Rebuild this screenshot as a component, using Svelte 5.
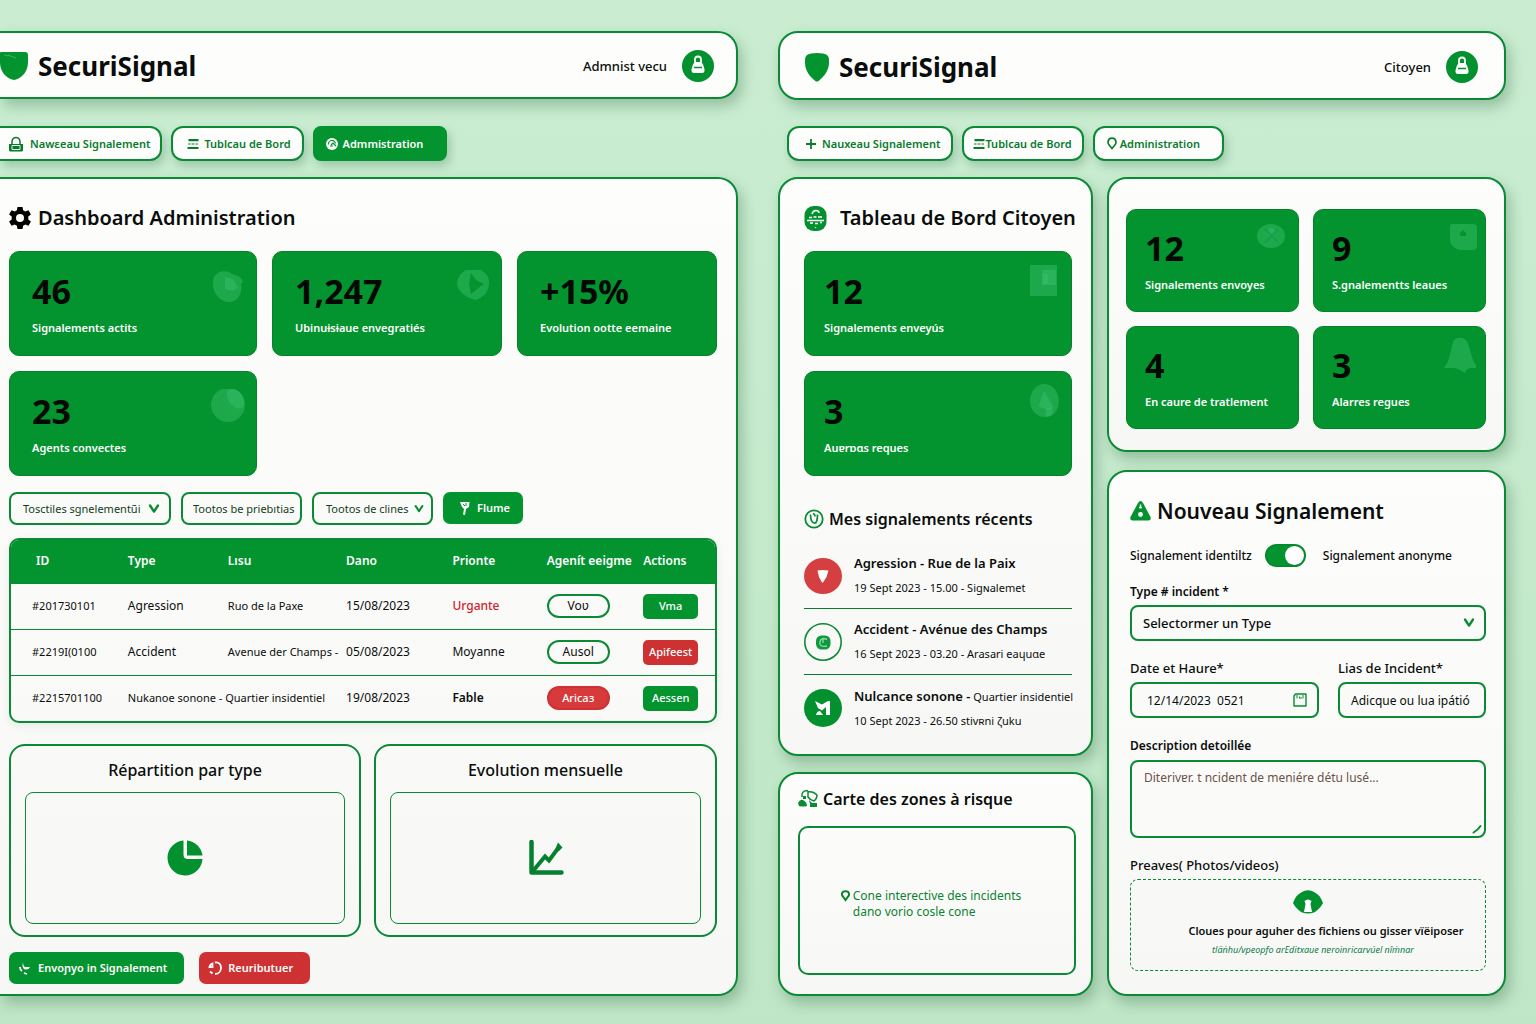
<script>
  const adminStats = [
    { value: '46', label: 'Signalements actits', art: 'blob' },
    { value: '1,247', label: 'Ubinuɨsɨaue envegratiés', art: 'play' },
    { value: '+15%', label: 'Evolution ootte eemaine', art: '' },
    { value: '23', label: 'Agents convectes', art: 'globe' }
  ];
  const citizenStats = [
    { value: '12', label: 'Signalements enveyús', art: 'square' },
    { value: '3', label: 'Auɐrɒɑs reques', art: 'drop' }
  ];
  const summaryStats = [
    { value: '12', label: 'Signalements envoyes', art: 'person' },
    { value: '9', label: 'S.gnalementts leaues', art: 'tile' },
    { value: '4', label: 'En caure de tratlement', art: '' },
    { value: '3', label: 'Alarres regues', art: 'bell' }
  ];
  const rows = [
    { id: '#201730101', type: 'Agression', place: 'Ruo de la Paxe', date: '15/08/2023', prio: 'Urgante', level: 'urgent', agent: 'Voʋ', agentKind: 'line', action: 'Vma', actionKind: 'go' },
    { id: '#2219I(0100', type: 'Accident', place: 'Avenue der Champs -', date: '05/08/2023', prio: 'Moyanne', level: 'medium', agent: 'Ausol', agentKind: 'line', action: 'Apifeest', actionKind: 'stop' },
    { id: '#2215701100', type: 'Nukanoe sonone - Quartier insidentiel', place: '', date: '19/08/2023', prio: 'Fable', level: 'low', agent: 'Aricaɜ', agentKind: 'full', action: 'Aessen', actionKind: 'go' }
  ];
  const recent = [
    { kind: 'alert', strong: 'Agression - Rue de la Paix', rest: '', meta: '19 Sept 2023 - 15.00 - Sigɴalemet' },
    { kind: 'ring', strong: 'Accident - Avénue des Champs', rest: '', meta: '16 Sept 2023 - 03.20 - Arasari eaɥuɑe' },
    { kind: 'noise', strong: 'Nulcance sonone -', rest: 'Quartier insidentiel', meta: '10 Sept 2023 - 26.50 stivʀni ζuku' }
  ];
  let anonymous = $state(true);
</script>

{#snippet chevron()}
  <svg class="chevron" viewBox="0 0 12 12" width="12" height="12" aria-hidden="true"><path d="M2 2.5 6 8.6 10 2.5" fill="none" stroke="currentColor" stroke-width="2.4" stroke-linecap="round" stroke-linejoin="round" /></svg>
{/snippet}

{#snippet bars()}
  <svg viewBox="0 0 12 12" width="12" height="12" aria-hidden="true"><path d="M1.500 2.200h10M.5 10h11" stroke="currentColor" stroke-width="2.200" /><path d="M1 6h2.500M4.500 6h3M8.500 6h2.500" stroke="currentColor" stroke-width="1.200" /></svg>
{/snippet}

{#snippet avatar()}
  <svg viewBox="0 0 32 32" width="32" height="32" aria-hidden="true">
    <circle cx="16" cy="16" r="16" fill="#03912f" />
    <path d="M13 12.500V9.500a3 3 0 0 1 6 0v3" fill="none" stroke="#fff" stroke-width="1.800" />
    <path d="M12.500 12h7q2.500 3 3 7.500.3 3.500-2.500 3.500h-8q-2.800 0-2.500-3.500.5-4.500 3-7.500z" fill="#fff" />
    <path d="M12 17.500h8" stroke="#03912f" stroke-width="1.500" />
  </svg>
{/snippet}

{#snippet art(name)}
  <svg class="art" viewBox="0 0 36 36" width="36" height="36" aria-hidden="true">
    {#if name === 'blob'}
      <path d="M5 8C9 1 19 1 23 5q8 1 11 8l-2 2c2 10-4 19-13 18C9 32 1 20 5 8z" /><path d="M16 8l8 2 5 9-6 3-7-2z" />
    {:else if name === 'play'}
      <path fill-rule="evenodd" d="M12 1h15q8 5 8 12c0 10-5 15-13 18C12 29 3 22 3 14q1-9 9-13zM17 4l-2 11 2 10 10-8 3-2-8-4z" />
    {:else if name === 'globe'}
      <circle cx="19" cy="16" r="17" /><path d="M18 2c8-5 18 2 17 13q-2 6-8 4-10-5-9-17z" /><path d="M0 14q-1 3 1 5" />
    {:else if name === 'square'}
      <path d="M6 2h27v31H6z" /><path d="M18 7h14v15H18z" /><path d="M19 11h5v10h-5z" />
    {:else if name === 'drop'}
      <path d="M20 1c19 0 20 33 1 33-8 0-15-6-15-16S13 1 20 1z" /><path d="M20 8l9 15q-3 6-10 2-5-1-4-3z" /><path d="M22 26l7-2-1 8-6 2z" />
    {:else if name === 'person'}
      <ellipse cx="15" cy="16" rx="14" ry="12" /><circle cx="15" cy="12" r="4" /><path d="M9 9l13 13M22 9L9 23" stroke="#16a04c" stroke-width="2" />
    {:else if name === 'tile'}
      <path fill-rule="evenodd" d="M8 4h22q4 0 4 3v19q0 4-4 4H17Q7 28 7 19V6zM20 10l-3 3v3h6v-3z" />
    {:else if name === 'bell'}
      <path d="M1 31C8 24 8 5 12 2q6-3 11 1c4 4 5 20 10 25v3h-6l-4 2-1 3-7-4-4-1z" />
    {/if}
  </svg>
{/snippet}

{#snippet stat(s)}
  <article class="stat">
    <div class="stat-top"><strong>{s.value}</strong>{#if s.art}{@render art(s.art)}{/if}</div>
    <p>{s.label}</p>
  </article>
{/snippet}

<div class="board">
  <section class="app admin">
    <header class="topbar">
      <svg viewBox="0 0 28 28" width="28" height="28" aria-hidden="true"><path d="M1 0h24q3 0 3 3v7c0 9-5 15-12 17.500q-2 .8-4 0C5 25 0 19 0 10V1q0-1 1-1z" fill="#03942f" /><path d="M4 3l5 1M8 3l8 3" stroke="#58bd76" stroke-width=".7" /></svg>
      <h1>SecuriSignal</h1>
      <span class="user">Admnist vecu</span>
      {@render avatar()}
    </header>

    <nav class="tabs" aria-label="Administration">
      <button type="button">
        <svg viewBox="0 0 16 16" width="16" height="16" aria-hidden="true"><path d="M1 8h14v6q0 1.500-1.500 1.500h-11Q1 15.500 1 14z" fill="currentColor" /><path d="M4 8V5.500Q4.500 1.500 8 1.500T12 5.500V8" fill="none" stroke="currentColor" stroke-width="1.500" /><path d="M4 9.500h8v4H4zM6 5h4" stroke="#fff" fill="none" stroke-width=".9" /></svg>
        Nawɛeau Signalement
      </button>
      <button type="button">{@render bars()} Tublcau de Bord</button>
      <button type="button" class="on">
        <svg viewBox="0 0 12 12" width="12" height="12" aria-hidden="true"><circle cx="6" cy="6" r="6" fill="#fff" /><path d="M2.500 6.500a3.500 3.500 0 0 1 7-1M5 7l2-2 3 3M4 8h3" fill="none" stroke="#03942f" stroke-width="1.200" /></svg>
        Admmistration
      </button>
    </nav>

    <main class="panel dash">
      <h2 class="title">
        <svg viewBox="1 1 22 22" width="22" height="22" aria-hidden="true"><path d="M9.500 1h5l.6 3.300 2.200 1.200 3.200-1.300 2.400 4.200-2.600 2.200v2.800l2.600 2.200-2.400 4.200-3.200-1.300-2.200 1.200-.6 3.300h-5l-.6-3.300-2.200-1.200-3.200 1.300-2.400-4.200 2.600-2.200v-2.800L1.100 8.400l2.400-4.200 3.200 1.300 2.200-1.200z" /><circle cx="12" cy="12" r="4" fill="#fcfdfb" /></svg>
        Dashboard Administration
      </h2>
      <div class="stats three">
        {#each adminStats as s}{@render stat(s)}{/each}
      </div>

      <form class="filters">
        <span class="pick wide">
          <select aria-label="Signalements"><option>Tosctiles sgnelementũi</option></select>
          {@render chevron()}
        </span>
        <span class="pick mid plain"><select aria-label="Priorités"><option>Tootos be priebıtias</option></select></span>
        <span class="pick mid">
          <select aria-label="Zones"><option>Tootos de clines</option></select>
          {@render chevron()}
        </span>
        <button type="button" class="btn go filter">
          <svg viewBox="0 0 12 16" width="12" height="16" aria-hidden="true"><path d="M1 2h9.500l-.5 5-3 2-1 6-2-.5L5 9 3 7z" fill="#fff" /><path d="M4 4l2 2M7 3v3" stroke="#03942f" stroke-width="1" /></svg>
          Flume
        </button>
      </form>

      <div class="tablebox">
        <table>
          <colgroup><col class="c1" /><col class="c2" /><col class="c3" /><col class="c4" /><col class="c5" /><col class="c6" /><col class="c7" /></colgroup>
          <thead><tr><th>ID</th><th>Type</th><th>Lısu</th><th>Dano</th><th>Prionte</th><th>Agenít eeigme</th><th>Actions</th></tr></thead>
          <tbody>
            {#each rows as r}
              <tr>
                <td class="ref">{r.id}</td>
                {#if r.place}
                  <td>{r.type}</td><td class="place">{r.place}</td>
                {:else}
                  <td class="place" colspan="2">{r.type}</td>
                {/if}
                <td>{r.date}</td>
                <td class={r.level}>{r.prio}</td>
                <td><button type="button" class="pill {r.agentKind}">{r.agent}</button></td>
                <td><button type="button" class="act {r.actionKind}">{r.action}</button></td>
              </tr>
            {/each}
          </tbody>
        </table>
      </div>

      <div class="charts">
        <figure>
          <figcaption>Répartition par type</figcaption>
          <div class="plot">
            <svg viewBox="0 0 36 36" width="36" height="36" aria-hidden="true"><path d="M16.500 0.500A17.500 17.500 0 1 0 35.500 19H21q-4.500 0-4.500-4.500z" fill="#03912f" /><path d="M20 .5A17.500 17.500 0 0 1 35.500 15.500H20z" fill="#03912f" /></svg>
          </div>
        </figure>
        <figure>
          <figcaption>Evolution mensuelle</figcaption>
          <div class="plot">
            <svg viewBox="0 0 36 36" width="36" height="36" aria-hidden="true"><path d="M3.500 2v30.500h30" fill="none" stroke="#068030" stroke-width="4.500" stroke-linejoin="round" stroke-linecap="round" /><path d="M5 31L17 16.500l4 4L31 7" fill="none" stroke="#068030" stroke-width="4" /><path d="M30 2.500l4.500 5-4 4-3-3z" fill="#068030" /></svg>
          </div>
        </figure>
      </div>

      <div class="actions">
        <button type="button" class="btn go">
          <svg viewBox="0 0 14 14" width="14" height="14" aria-hidden="true"><path d="M5 1q0 4 2 5h5Q11 9 7 8.500 3.500 7 5 1z" fill="#fff" /><path d="M2 6q0 3 2 4M6 12l3 1" stroke="#fff" stroke-width="1.800" /></svg>
          Envoɲyo in Signalement
        </button>
        <button type="button" class="btn stop">
          <svg viewBox="0 0 14 14" width="14" height="14" aria-hidden="true"><path d="M7 1.500C15 0 15 13 7 13M4.500 12.500 2 10.500M1.500 7Q1 4 4.500 2.500L4.500 6H1" fill="none" stroke="#fff" stroke-width="1.800" /></svg>
          Reuributuer
        </button>
      </div>
    </main>
  </section>

  <section class="app citizen">
    <header class="topbar">
      <svg viewBox="0 0 24 29" width="24" height="29" aria-hidden="true"><path d="M6 .5Q12-.3 18 .5q6 1 6 6v3c0 8-5 14-11 19h-2C5 24 0 18 0 9.500v-3q0-5 6-6z" fill="#03942f" /></svg>
      <h1>SecuriSignal</h1>
      <span class="user">Citoyen</span>
      {@render avatar()}
    </header>

    <nav class="tabs" aria-label="Citoyen">
      <button type="button" class="new">
        <svg viewBox="0 0 12 12" width="12" height="12" aria-hidden="true"><path d="M6 1v10M1 6h10" stroke="currentColor" stroke-width="1.800" /></svg>
        Nauxeau Signalement
      </button>
      <button type="button" class="tight">{@render bars()}Tublcau de Bord</button>
      <button type="button" class="near">
        <svg viewBox="0 0 10 13" width="10" height="13" aria-hidden="true"><path d="M5 1.200C10 1.200 9.500 7 7.500 8.500L5 11.500 2.500 8.500C.5 7 0 1.200 5 1.200z" fill="none" stroke="currentColor" stroke-width="1.700" /></svg>
        Administration
      </button>
    </nav>

    <div class="columns">
      <div class="stack">
        <section class="panel home">
          <h2 class="title">
            <svg viewBox="0 0 23 25" width="23" height="25" aria-hidden="true"><rect x=".5" y="0" width="22" height="25" rx="9" fill="#03912f" /><path d="M8 8q1-3.500 4-3.500T15 7M5 11.500h3M9.500 11h3M14 11h4M3 14.500h17M6 17h3M11 17.500h3M16 16.500h2" fill="none" stroke="#fff" stroke-width="1.600" /><circle cx="11.500" cy="21.500" r=".8" fill="#bfe5c7" /></svg>
            Tableau de Bord Citoyen
          </h2>
          <div class="stats one">
            {#each citizenStats as s}{@render stat(s)}{/each}
          </div>
          <h3 class="subtitle">
            <svg viewBox="0 0 20 20" width="20" height="20" aria-hidden="true"><circle cx="10" cy="10" r="8.700" fill="none" stroke="#0b8a35" stroke-width="1.800" /><path d="M6.500 5.500Q6.500 13 10 14t3.500-8.500M9 4.500q2 .5 2 3" fill="none" stroke="#0b8a35" stroke-width="1.700" /></svg>
            Mes signalements récents
          </h3>
          <ul class="recent">
            {#each recent as r}
              <li>
                <svg viewBox="0 0 38 38" width="38" height="38" aria-hidden="true">
                  {#if r.kind === 'alert'}
                    <ellipse cx="19" cy="19" rx="19" ry="18" fill="#d63f41" /><path d="M13.500 13.500q5-1 11 0-1 6-5.500 12h-1q-4-6-4.500-12z" fill="#fff" />
                  {:else if r.kind === 'ring'}
                    <circle cx="19" cy="19" r="18.200" fill="none" stroke="#0b8a35" stroke-width="1.600" /><rect x="12" y="12.500" width="14.500" height="14" rx="5.500" fill="#0b9a3c" /><path d="M23 16.500q-6-3-7 2.500t7 4M19 16v4" fill="none" stroke="#8fd4a4" stroke-width="1.400" />
                  {:else}
                    <circle cx="19" cy="19" r="19" fill="#03912f" /><path d="M11 12l7 3.500 6-3.500h2v14h-4v-8l-4 3.500-4-2.500zM12 26q1-4 4-4l3 4z" fill="#fff" />
                  {/if}
                </svg>
                <div><p class="what"><b>{r.strong}</b> {r.rest}</p><p class="meta">{r.meta}</p></div>
              </li>
            {/each}
          </ul>
        </section>

        <section class="panel map">
          <h3 class="subtitle">
            <svg viewBox="0 0 20 20" width="20" height="20" aria-hidden="true"><path d="M4 8Q3 2 9 1.500l2 2M10 3q5-1 9 3 0 4-3 6-4-1-6-4z" fill="none" stroke="#0b8a35" stroke-width="1.500" /><path d="M0 14q2-4 5-3 4 2 4 6-4 1-8 0zM5 7h3v3H5zM11 11l3 3h5v4h-7v-3z" fill="#0b8a35" /></svg>
            Carte des zones à risque
          </h3>
          <div class="mapbox">
            <svg viewBox="0 0 10 13" width="9" height="12" aria-hidden="true"><path d="M5 1.300C10 1.300 9.500 6 7.500 7.500L5 11 2.500 7.500C.5 6 0 1.300 5 1.300z" fill="none" stroke="currentColor" stroke-width="2.200" /></svg>
            <p>Cone interective des incidents<br />dano vorio cosle cone</p>
          </div>
        </section>
      </div>

      <div class="stack">
        <section class="panel summary">
          <div class="stats two">
            {#each summaryStats as s}{@render stat(s)}{/each}
          </div>
        </section>

        <form class="panel report">
          <h2 class="title">
            <svg viewBox="0 0 21 20" width="21" height="20" aria-hidden="true"><path d="M10.500 0q1.500 0 2.500 2l7.500 14q1 3.500-2 3.500h-16Q-.5 19.500.5 16L8 2q1-2 2.500-2z" fill="#03912f" /><path d="M10.500 3.500v4M9 6.500h3" stroke="#fff" stroke-width="1.400" /><circle cx="10.500" cy="13.500" r="2.400" fill="#fff" /></svg>
            Nouveau Signalement
          </h2>
          <div class="switch">
            <label for="anon">Signalement identiltz</label>
            <input id="anon" type="checkbox" role="switch" bind:checked={anonymous} />
            <label for="anon">Signalement anonyme</label>
          </div>
          <div class="field small">
            <label for="kind">Type # incident *</label>
            <span class="pick">
              <select id="kind"><option>Selectormer un Type</option></select>
              {@render chevron()}
            </span>
          </div>
          <div class="pair">
            <div class="field">
              <label for="when">Date et Haure*</label>
              <span class="pick">
                <input id="when" type="text" value="12/14/2023  0521" />
                <svg class="cal" viewBox="0 0 14 14" width="14" height="14" aria-hidden="true"><path d="M2.500 1h10.500v12H1V3z" fill="none" stroke="#0b8a35" stroke-width="1.400" stroke-linejoin="round" /><path d="M4 2v3.500M6.500 3.500v2M7 5h2M10 2v3.500" stroke="#0b8a35" stroke-width="1" /></svg>
              </span>
            </div>
            <div class="field">
              <label for="where">Lias de Incident*</label>
              <input id="where" type="text" value="Adicque ou lua ipátió" />
            </div>
          </div>
          <div class="field small">
            <label for="what">Description detoillée</label>
            <span class="pick area">
              <textarea id="what" placeholder="Diterivɐr. t ncident de meniére détu lusé..."></textarea>
              <svg class="grip" viewBox="0 0 10 10" width="10" height="10" aria-hidden="true"><path d="M1.500 8.500Q6 6 8.500 2" fill="none" stroke="#0b8a35" stroke-width="2" stroke-linecap="round" /></svg>
            </span>
          </div>
          <div class="field">
            <label for="proof">Preaves( Photos/videos)</label>
            <label class="drop" for="proof">
              <svg viewBox="0 0 30 24" width="30" height="24" aria-hidden="true"><path d="M0 13Q3 4 11 1q4-1.500 8 0 8 3 11 12-3 6-9 9.500-6 2-12 0Q3 19 0 13z" fill="#03912f" /><path d="M11.500 11q3.500-3 7 0l-1 3 1.500 8h-8l1.500-8z" fill="#fff" /></svg>
              <span class="hint">Cloues pour aguher des fichiens ou gisser vïëiposer</span>
              <small>tläṅhu/vpeopfo arEditxaue nɐroinricɑrvúel nîṁnar</small>
            </label>
            <input id="proof" class="hidden" type="file" />
          </div>
        </form>
      </div>
    </div>
  </section>
</div>

<style>
  :global(body) {
    margin: 0;
    background: #c3e8cb;
  }
  .board {
    --green: #03942f;
    --line: #0b8a35;
    --red: #cd3131;
    box-sizing: border-box;
    min-height: 100vh;
    display: grid;
    grid-template-columns: 738fr 728fr;
    gap: 40px;
    padding: 31px 30px 28px 0;
    background: linear-gradient(#caedd1, #bfe6c7);
    color: #0a0d0b;
    font: 400 12px/18px 'Noto Sans', 'Open Sans', sans-serif;
  }
  .board :is(*, *::before) { box-sizing: border-box; }
  h1, h2, h3, p, ul, figure { margin: 0; padding: 0; }
  svg { flex: none; display: block; }
  button, select, input, textarea { font: inherit; color: inherit; margin: 0; }
  button { cursor: pointer; }
  .app { min-width: 0; display: flex; flex-direction: column; }

  .topbar, .panel {
    border: 2px solid var(--line);
    border-radius: 20px;
    background: linear-gradient(#fdfdfc, #f7f8f6);
    box-shadow: 4px 7px 14px rgba(10, 70, 30, .27);
  }
  .topbar { background: #fdfdfb; }
  .admin .topbar, .admin .panel { border-left: 0; border-radius: 0 20px 20px 0; }
  .topbar { display: flex; align-items: center; padding: 16px 22px 14px 0; gap: 10px; }
  .citizen .topbar { padding: 17px 26px 14px 25px; }
  h1 { flex: 1; font-size: 26px; line-height: 34px; font-weight: 700; }
  .user { font-size: 13px; font-weight: 500; margin-right: 5px; }

  .tabs { display: flex; gap: 9px; margin: 27px 0 16px; }
  .citizen .tabs { margin: 26px 0 16px 9px; }
  .tabs button {
    display: flex; align-items: center; gap: 5px;
    height: 35px; padding: 0 11px 0 14px;
    border: 2px solid var(--line); border-radius: 12px;
    background: #fdfefc; color: #097a2e;
    font-size: 11px; font-weight: 600; white-space: nowrap;
    box-shadow: 3px 5px 10px rgba(10, 70, 30, .22);
  }
  .admin .tabs button:first-child { border-left: 0; border-radius: 0 12px 12px 0; padding: 0 10px 0 8px; gap: 6px; }
  .tabs button.on { background: var(--green); border-color: var(--green); color: #fff; border-radius: 8px; padding: 0 22px 0 11px; }
  .tabs button.new { padding-left: 16px; }
  .tabs button.tight { gap: 0; padding: 0 10px 0 9px; }
  .tabs button.near { gap: 3px; padding: 0 22px 0 12px; }

  .title { display: flex; align-items: center; gap: 7px; font-size: 20px; line-height: 30px; font-weight: 600; white-space: nowrap; }
  .dash { flex: 1; padding: 24px 19px 10px 9px; }

  .stats { display: grid; gap: 15px; margin-top: 18px; }
  .three { grid-template-columns: 248fr 230fr 200fr; }
  .two { grid-template-columns: 1fr 1fr; gap: 14px; margin-top: 0; }
  .stat { background: var(--green); border: 1px solid #058328; border-radius: 10px; padding: 17px 11px 18px 22px; min-width: 0; }
  .stat-top { display: flex; justify-content: space-between; }
  .stat strong { font-size: 34px; line-height: 44px; font-weight: 700; color: #030803; }
  .stat p { color: #fff; font-size: 11px; font-weight: 600; line-height: 18px; margin-top: 6px; white-space: nowrap; }
  .art { fill: #3cbf70; fill-opacity: .46; }
  .one .stat { padding-left: 19px; }
  .two .stat { padding: 16px 6px 17px 18px; }
  .one .art, .two .art { margin-top: -6px; }

  .filters { display: flex; gap: 10px; margin-top: 16px; height: 33px; }
  .pick { display: grid; align-items: center; }
  .pick > * { grid-area: 1 / 1; }
  .pick select { appearance: none; width: 100%; height: 100%; cursor: pointer; }
  .pick .chevron { justify-self: end; margin-right: 11px; color: var(--line); pointer-events: none; }
  select, input[type='text'], textarea { border: 2px solid var(--line); border-radius: 8px; background: #fafbf9; outline: none; min-width: 0; width: 100%; }
  .filters select { font-size: 11px; padding: 0 10px 0 12px; color: #123d20; }
  .filters .plain select { padding-right: 0; padding-left: 10px; }
  .wide { flex: 0 1 162px; }
  .mid { flex: 0 1 121px; }
  .mid .chevron { width: 10px; margin-right: 9px; }
  .btn { display: flex; align-items: center; gap: 6px; height: 32px; border: 0; border-radius: 7px; color: #fff; font-size: 11px; font-weight: 600; white-space: nowrap; padding: 0 17px 0 9px; }
  .go { background: var(--green); }
  .stop { background: var(--red); }
  .filter { padding: 0 13px 0 16px; }

  .tablebox { margin-top: 13px; border: 2px solid var(--line); border-radius: 10px; overflow: hidden; box-shadow: 0 3px 8px rgba(10, 70, 30, .08); }
  table { width: 100%; table-layout: fixed; border-collapse: collapse; }
  th, td { text-align: left; padding: 0; white-space: nowrap; }
  th { background: var(--green); color: #fff; font-weight: 600; height: 43px; }
  td { height: 46px; border-top: 1px solid #0b8a35; }
  th:first-child { padding-left: 25px; }
  td:first-child { padding-left: 21px; }
  .ref, .place { font-size: 11px; }
  .c1 { width: 16.600%; } .c2 { width: 14.200%; } .c3 { width: 16.800%; } .c4 { width: 15.100%; } .c5 { width: 13.400%; } .c6 { width: 13.700%; } .c7 { width: 10.200%; }
  .urgent { color: #d3222a; font-weight: 500; }
  .low { font-weight: 600; }
  .pill, .act { display: block; padding: 0; text-align: center; }
  .pill { width: 63px; height: 24px; border: 2px solid var(--line); border-radius: 12px; background: transparent; }
  .pill.full { background: #d63a3a; border-color: var(--red); color: #fff; font-size: 11px; line-height: 16px; font-weight: 500; }
  .act { width: 55px; height: 25px; border: 0; border-radius: 5px; color: #fff; font-size: 11px; font-weight: 500; }
  .act.go { background: var(--green); }
  .act.stop { background: var(--red); }

  .charts { display: grid; grid-template-columns: 352fr 343fr; gap: 13px; margin-top: 21px; }
  figure { border: 2px solid var(--line); border-radius: 16px; padding: 11px 14px 11px; }
  figcaption { text-align: center; font-size: 16px; line-height: 26px; font-weight: 500; }
  .plot { margin-top: 9px; padding: 47px 0; border: 1px solid var(--line); border-radius: 8px; display: grid; place-items: center; }
  .actions { display: flex; gap: 15px; margin-top: 15px; }

  .columns { flex: 1; display: grid; grid-template-columns: 315fr 399fr; gap: 14px; }
  .stack { display: flex; flex-direction: column; gap: 16px; min-width: 0; }
  .home { padding: 24px 19px 13px 24px; }
  .home .title { gap: 13px; }
  .subtitle { display: flex; align-items: center; gap: 5px; font-size: 16px; line-height: 24px; font-weight: 600; white-space: nowrap; }
  .home .subtitle { margin-top: 31px; }
  .recent { list-style: none; margin-top: 12px; }
  .recent li { display: flex; align-items: center; gap: 12px; height: 66px; border-bottom: 1px solid #0b7a2c; font-size: 11px; white-space: nowrap; }
  .recent li:last-child { border-bottom: 0; }
  .recent .what { line-height: 20px; }
  .recent b { font-size: 13px; font-weight: 600; }
  .recent .meta { margin-top: 4px; line-height: 20px; }
  .map { flex: 1; display: flex; flex-direction: column; padding: 13px 15px 19px 18px; }
  .mapbox { flex: 1; margin-top: 15px; border: 2px solid var(--line); border-radius: 10px; display: flex; align-items: center; justify-content: center; gap: 3px; color: #0b8230; padding: 6px 12px 0 0; line-height: 16px; }
  .mapbox svg { align-self: center; margin-bottom: 16px; }

  .summary { padding: 30px 18px 21px 17px; margin-bottom: 2px; }
  .report { flex: 1; padding: 24px 18px 20px 21px; display: flex; flex-direction: column; }
  .report .title { gap: 6px; font-size: 21px; }
  .switch { display: flex; align-items: center; gap: 13px; margin-top: 18px; font-weight: 500; white-space: nowrap; }
  .switch label:last-child { margin-left: 4px; }
  .switch input { appearance: none; width: 41px; height: 23px; border: 2px solid #038a2b; border-radius: 12px; background: #fff; padding: 0; cursor: pointer; }
  .switch input::before { content: ''; display: block; width: 19px; height: 19px; border-radius: 50%; background: var(--green); }
  .switch input:checked { background: var(--green); }
  .switch input:checked::before { background: #fff; margin-left: 18px; }
  .field { display: flex; flex-direction: column; gap: 3px; font-size: 13px; margin-top: 15px; min-width: 0; }
  .field > label:first-child { font-weight: 500; line-height: 20px; white-space: nowrap; }
  .small > label:first-child { font-size: 12px; font-weight: 600; }
  .field select, .field input[type='text'] { height: 36px; padding: 0 11px; }
  .field .pick select { font-weight: 500; }
  .pair { display: grid; grid-template-columns: 189fr 148fr; gap: 19px; margin-top: 2px; }
  .pair .field { gap: 4px; }
  .pair .field .pick input { padding-left: 15px; white-space: pre; }
  .pair input { font-size: 12px; }
  .cal { justify-self: end; margin-right: 12px; }
  .report > .pair + .field { margin-top: 18px; gap: 4px; }
  .report > .field:last-child { margin-top: 17px; }
  textarea { display: block; height: 78px; padding: 7px 12px; resize: none; font-size: 12px; }
  textarea::placeholder { color: #6a5248; opacity: 1; }
  .grip { place-self: end; margin: 4px; }
  .drop { display: flex; flex-direction: column; align-items: center; border: 1px dashed var(--line); border-radius: 8px; padding: 10px 0; margin-top: 1px; cursor: pointer; }
  .drop .hint { font-weight: 600; font-size: 11px; line-height: 18px; margin-top: 8px; padding-left: 36px; white-space: nowrap; }
  .drop small { font-size: 9px; font-style: italic; line-height: 20px; color: #0b7a4a; padding-left: 10px; white-space: nowrap; }
  .hidden { position: absolute; width: 1px; height: 1px; opacity: 0; pointer-events: none; }
</style>
